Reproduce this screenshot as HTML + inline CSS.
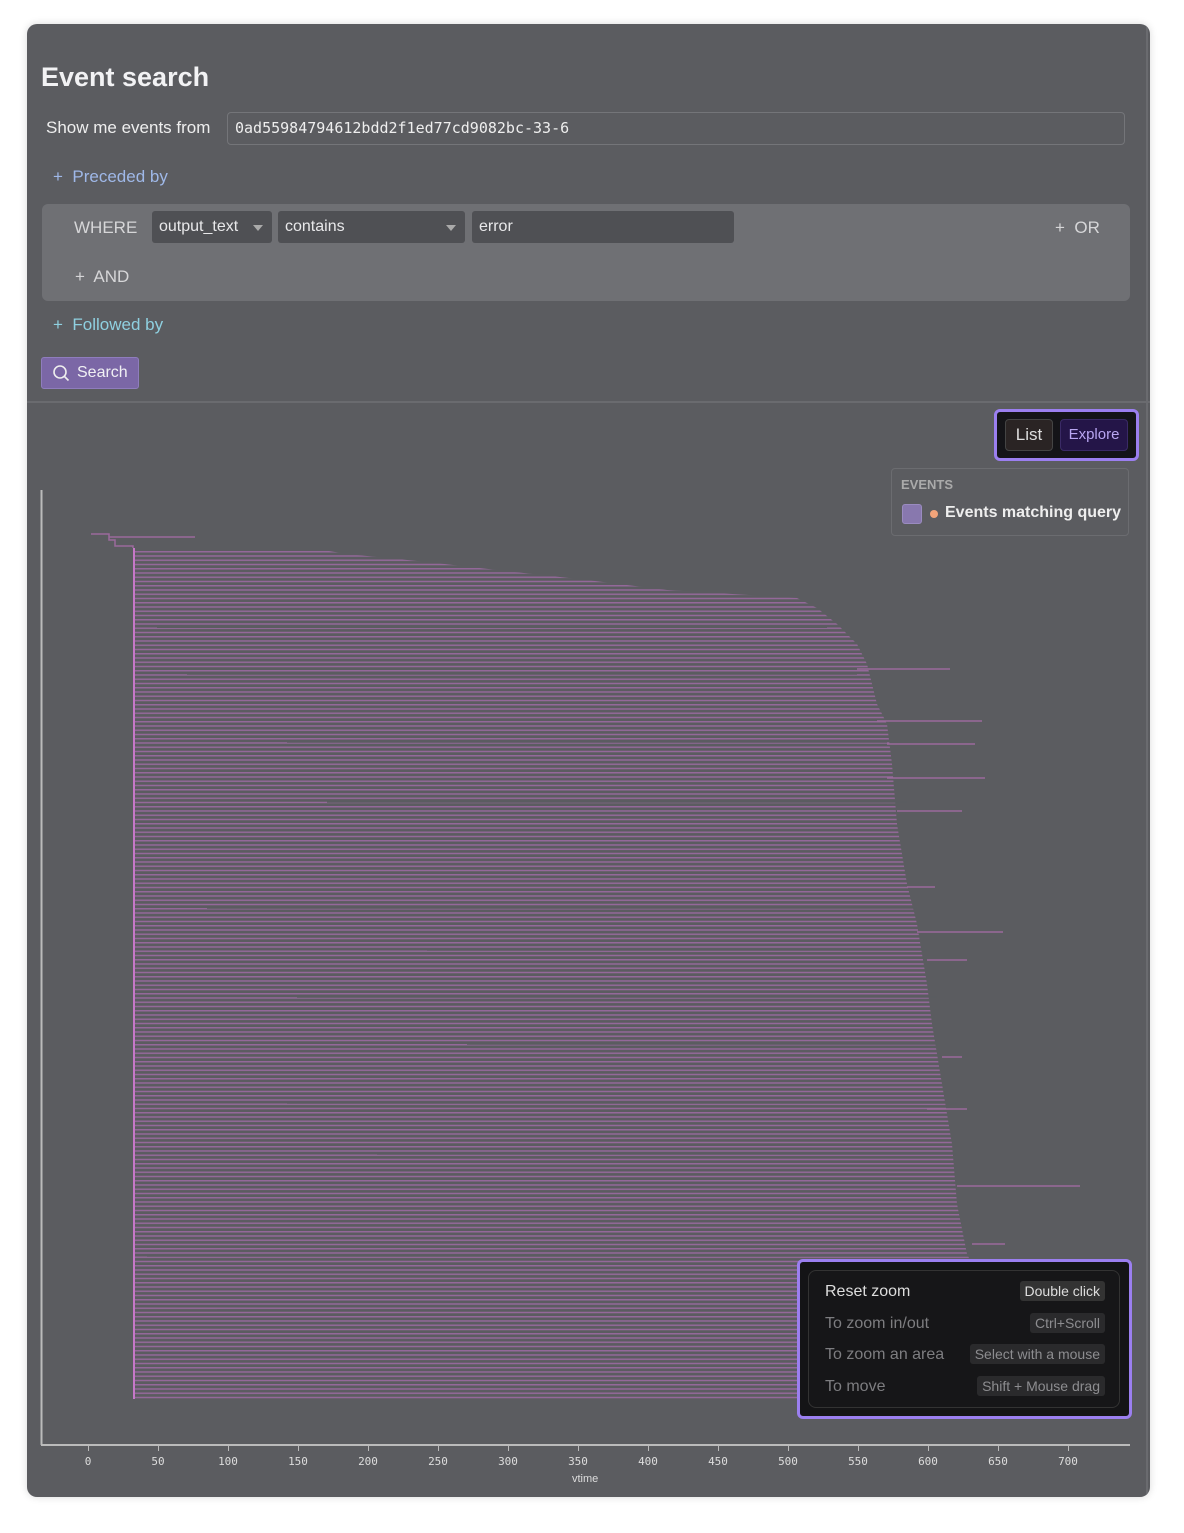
<!DOCTYPE html>
<html><head><meta charset="utf-8"><style>
*{box-sizing:border-box;margin:0;padding:0}
body{width:1184px;height:1533px;background:#fff;font-family:"Liberation Sans",sans-serif;position:relative;overflow:hidden}
.card{position:absolute;left:27px;top:24px;width:1123px;height:1473px;background:#5b5c60;border-radius:10px;overflow:hidden;box-shadow:0 0 8px rgba(0,0,0,.15)}
.a{position:absolute;white-space:nowrap}
.sel{position:absolute;background:#4f5054;border-radius:3px;color:#e8e8ea;font-size:16px;line-height:32px;padding-left:7px}
.tri{position:absolute;width:0;height:0;border-left:5px solid transparent;border-right:5px solid transparent;border-top:6px solid #aaa}
.kb{position:absolute;right:14px;background:#2a2a2c;color:#8d8d90;font-size:14px;line-height:20px;padding:0 5px;border-radius:3px}
.tk{position:absolute;top:1421px;width:1px;height:6px;background:#bbb}
.tl{position:absolute;top:1431px;width:40px;margin-left:-20px;text-align:center;font-family:"DejaVu Sans Mono","Liberation Mono",monospace;font-size:11px;color:#ddd}
</style></head><body>
<div class="card">
<div class="a" style="left:14px;top:38px;font-size:27px;font-weight:bold;color:#f2f2f4">Event search</div>
<div class="a" style="left:19px;top:94px;font-size:17px;color:#eee">Show me events from</div>
<div class="a" style="left:200px;top:88px;width:898px;height:33px;border:1px solid #747579;border-radius:4px;color:#eee;font-family:'DejaVu Sans Mono','Liberation Mono',monospace;font-size:15px;line-height:31px;padding-left:7px">0ad55984794612bdd2f1ed77cd9082bc-33-6</div>
<div class="a" style="left:26px;top:143px;font-size:17px;color:#9fb8e8">+&nbsp; Preceded by</div>
<div class="a" style="left:15px;top:180px;width:1088px;height:97px;background:#6f7074;border-radius:6px"></div>
<div class="a" style="left:47px;top:194px;font-size:17px;color:#d6d6d8">WHERE</div>
<div class="sel" style="left:125px;top:187px;width:120px;height:32px">output_text</div><div class="tri" style="left:226px;top:201px"></div>
<div class="sel" style="left:251px;top:187px;width:187px;height:32px">contains</div><div class="tri" style="left:419px;top:201px"></div>
<div class="sel" style="left:445px;top:187px;width:262px;height:32px">error</div>
<div class="a" style="left:1028px;top:194px;font-size:17px;color:#d6d6d8">+&nbsp; OR</div>
<div class="a" style="left:48px;top:243px;font-size:17px;color:#d6d6d8">+&nbsp; AND</div>
<div class="a" style="left:26px;top:291px;font-size:17px;color:#8fd0e0">+&nbsp; Followed by</div>
<div class="a" style="left:14px;top:333px;width:98px;height:32px;background:#7b67a6;border:1px solid #8f7dbd;border-radius:3px;color:#f0f0f4;font-size:16px;line-height:30px;padding-left:35px">Search</div>
<svg class="a" style="left:25px;top:340px" width="18" height="18"><circle cx="8" cy="8" r="6" fill="none" stroke="#eee" stroke-width="1.6"/><line x1="12.5" y1="12.5" x2="16.5" y2="16.5" stroke="#eee" stroke-width="1.6"/></svg>
<div class="a" style="left:0;top:377px;width:1123px;height:2px;background:#6a6b6f"></div>
<div class="a" style="left:1119px;top:0;width:2px;height:1473px;background:#6a6b6f"></div>
<div class="a" style="left:967px;top:385px;width:145px;height:52px;background:#141418;border:3px solid #9b7ff0;border-radius:6px"></div>
<div class="a" style="left:978px;top:395px;width:48px;height:32px;background:#2a2424;border:1px solid #444;border-radius:4px;color:#ddd;font-size:17px;line-height:30px;text-align:center">List</div>
<div class="a" style="left:1033px;top:395px;width:68px;height:32px;background:#241548;border:1px solid #3a2a66;border-radius:4px;color:#b9a6f2;font-size:15px;line-height:30px;text-align:center">Explore</div>
<div class="a" style="left:864px;top:444px;width:238px;height:68px;border:1px solid #6b6c70;border-radius:4px"></div>
<div class="a" style="left:874px;top:453px;font-size:13px;font-weight:bold;color:#aaa">EVENTS</div>
<div class="a" style="left:875px;top:480px;width:20px;height:20px;background:#8878ae;border:1px solid #9a8bc0;border-radius:3px"></div>
<div class="a" style="left:903px;top:486px;width:8px;height:8px;background:#f2a47a;border-radius:50%"></div>
<div class="a" style="left:918px;top:480px;font-size:16px;font-weight:bold;color:#eee">Events matching query</div>
<svg class="a" style="left:0;top:0" width="1123" height="1473">
<defs><pattern id="p" width="10" height="4.25" patternUnits="userSpaceOnUse"><rect width="10" height="1.5" fill="#94689a"/></pattern></defs>
<polygon fill="url(#p)" points="107,525 290,525 320,530 400,538 470,546 560,556 640,566 770,574 790,584 810,600 830,620 840,640 850,680 860,700 865,740 870,800 880,860 890,900 900,960 905,1000 915,1060 925,1120 930,1180 940,1230 950,1250 950,1375 107,1375"/>
<g stroke="#5b5c60" stroke-width="1.6">
<line x1="130" y1="603.2" x2="800" y2="603.2"/><line x1="160" y1="650" x2="830" y2="650"/><line x1="260" y1="718" x2="860" y2="718"/><line x1="300" y1="778" x2="880" y2="778"/><line x1="180" y1="884" x2="890" y2="884"/><line x1="400" y1="926" x2="900" y2="926"/><line x1="270" y1="973" x2="910" y2="973"/><line x1="440" y1="1020" x2="910" y2="1020"/><line x1="260" y1="1079" x2="930" y2="1079"/><line x1="350" y1="1130" x2="930" y2="1130"/><line x1="260" y1="1197" x2="940" y2="1197"/><line x1="120" y1="1232" x2="950" y2="1232"/><line x1="190" y1="1286" x2="950" y2="1286"/><line x1="280" y1="1350" x2="950" y2="1350"/></g>
<rect x="106" y="524" width="2" height="851" fill="#c678c8"/>
<path d="M64 510H82V516H88V522H106V524" fill="none" stroke="#9b6a9c" stroke-width="1.5"/>
<line x1="82" y1="513" x2="168" y2="513" stroke="#9b6a9c" stroke-width="1.5"/>
<g stroke="#9b6a9c" stroke-width="1.5"><line x1="830" y1="645" x2="923" y2="645"/><line x1="850" y1="697" x2="955" y2="697"/><line x1="860" y1="720" x2="948" y2="720"/><line x1="860" y1="754" x2="958" y2="754"/><line x1="870" y1="787" x2="935" y2="787"/><line x1="880" y1="863" x2="908" y2="863"/><line x1="890" y1="908" x2="976" y2="908"/><line x1="900" y1="936" x2="940" y2="936"/><line x1="915" y1="1033" x2="935" y2="1033"/><line x1="930" y1="1162" x2="1053" y2="1162"/><line x1="945" y1="1220" x2="978" y2="1220"/><line x1="900" y1="1085" x2="940" y2="1085"/></g>
<line x1="14.5" y1="466" x2="14.5" y2="1421" stroke="#bbb" stroke-width="2"/>
<line x1="14" y1="1421" x2="1103" y2="1421" stroke="#bbb" stroke-width="2"/>
</svg>
<div class="tk" style="left:61px"></div><div class="tk" style="left:131px"></div><div class="tk" style="left:201px"></div><div class="tk" style="left:271px"></div><div class="tk" style="left:341px"></div><div class="tk" style="left:411px"></div><div class="tk" style="left:481px"></div><div class="tk" style="left:551px"></div><div class="tk" style="left:621px"></div><div class="tk" style="left:691px"></div><div class="tk" style="left:761px"></div><div class="tk" style="left:831px"></div><div class="tk" style="left:901px"></div><div class="tk" style="left:971px"></div><div class="tk" style="left:1041px"></div>
<div class="tl" style="left:61px">0</div><div class="tl" style="left:131px">50</div><div class="tl" style="left:201px">100</div><div class="tl" style="left:271px">150</div><div class="tl" style="left:341px">200</div><div class="tl" style="left:411px">250</div><div class="tl" style="left:481px">300</div><div class="tl" style="left:551px">350</div><div class="tl" style="left:621px">400</div><div class="tl" style="left:691px">450</div><div class="tl" style="left:761px">500</div><div class="tl" style="left:831px">550</div><div class="tl" style="left:901px">600</div><div class="tl" style="left:971px">650</div><div class="tl" style="left:1041px">700</div>
<div class="a" style="left:545px;top:1449px;font-size:11px;color:#ddd">vtime</div>
<div class="a" style="left:770px;top:1235px;width:335px;height:160px;background:#141416;border:3px solid #9b7ff0;border-radius:6px"></div>
<div class="a" style="left:781px;top:1246px;width:312px;height:138px;background:#161618;border:1px solid #333;border-radius:8px">
<div class="a" style="left:16px;top:12px;font-size:16px;color:#ddd">Reset zoom</div><div class="kb" style="top:10px;background:#333;color:#ddd">Double click</div>
<div class="a" style="left:16px;top:44px;font-size:16px;color:#7d7d80">To zoom in/out</div><div class="kb" style="top:42px">Ctrl+Scroll</div>
<div class="a" style="left:16px;top:75px;font-size:16px;color:#7d7d80">To zoom an area</div><div class="kb" style="top:73px">Select with a mouse</div>
<div class="a" style="left:16px;top:107px;font-size:16px;color:#7d7d80">To move</div><div class="kb" style="top:105px">Shift + Mouse drag</div>
</div>
</div>
</body></html>
